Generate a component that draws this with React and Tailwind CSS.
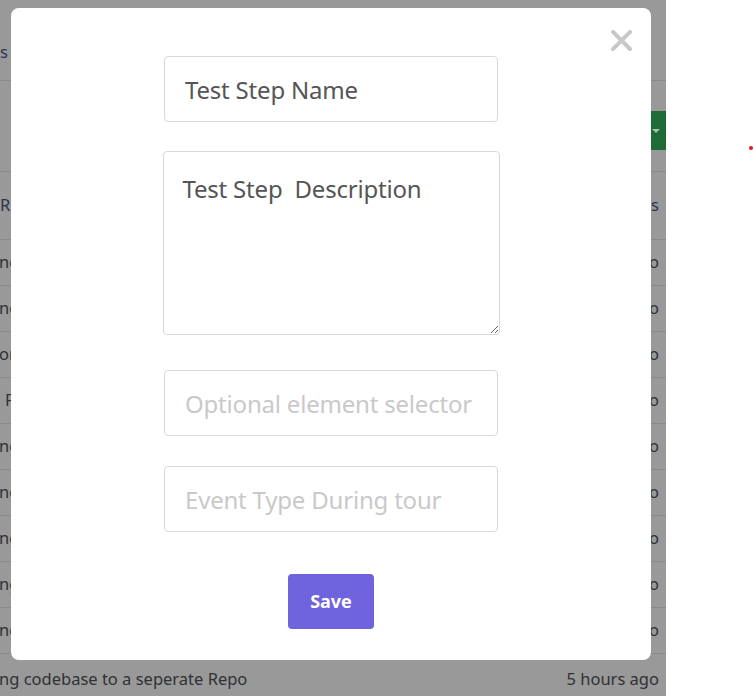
const rows = ["ng", "ng", "or", "F", "ng", "ng", "ng", "ng", "ng"];

const Row = ({ left, right }) => (
  <div className="flex h-[46px] items-center justify-between border-b border-[#8a8a8a] pr-[7px] text-[16.5px] text-[#2f3136]">
    <span className="-ml-[1px] whitespace-nowrap">{left}</span>
    <span className="whitespace-nowrap">{right}</span>
  </div>
);

const CloseIcon = () => (
  <svg width="21" height="21" viewBox="0 0 21 21" className="block">
    <path d="M2 2L19 19M19 2L2 19" stroke="#c8c8c8" strokeWidth="4" strokeLinecap="square" />
  </svg>
);

const App = () => (
  <div className="relative h-[696px] w-[754px] overflow-hidden bg-white font-['Noto_Sans',sans-serif]">
    {/* dimmed page behind the modal */}
    <div className="flex h-full w-[666px] flex-col bg-[#999999]">
      <div className="h-[81px] border-b border-[#8a8a8a] pt-[40px] text-[16.5px] leading-[24px] text-[#2a3550]">s</div>
      <div className="flex h-[91px] justify-end border-b border-[#8a8a8a]">
        <div className="mt-[30px] flex h-[39px] w-[15px] items-center bg-[#1e6b37] pl-[1px]">
          <span className="h-0 w-0 border-x-[4px] border-t-[4px] border-x-transparent border-t-[#a9c2b0]" />
        </div>
      </div>
      <div className="flex h-[68px] items-center justify-between border-b border-[#8a8a8a] pr-[7px] text-[16.5px] text-[#2a3550]">
        <span>R</span>
        <span>s</span>
      </div>
      {rows.map((r, i) => (
        <Row key={i} left={r === "F" ? <span className="pl-[6px]">F</span> : r} right="ago" />
      ))}
      <div className="flex flex-1 items-center justify-between pr-[7px] pt-[9px] text-[16.5px] text-[#2f3136]">
        <span className="-ml-[1px] whitespace-nowrap">ng codebase to a seperate Repo</span>
        <span className="whitespace-nowrap">5 hours ago</span>
      </div>
    </div>

    <span className="absolute left-[749px] top-[146px] h-[4px] w-[4px] rounded-full bg-[#e21b1b]" />

    {/* modal */}
    <div className="absolute left-[11px] top-[8px] flex h-[652px] w-[640px] flex-col items-center rounded-[8px] bg-white pt-[48px] tracking-[-0.2px]">
      <button className="absolute right-[19px] top-[22px]">
        <CloseIcon />
      </button>
      <input
        readOnly
        value="Test Step Name"
        className="h-[66px] w-[334px] rounded-[4px] border border-[#d9d9d9] px-[20px] text-[24px] text-[#555555] outline-none"
      />
      <textarea
        readOnly
        value="Test Step  Description"
        className="mt-[29px] h-[184px] w-[337px] rounded-[4px] border border-[#d9d9d9] px-[19px] pt-[19px] text-[24px] leading-[36px] text-[#555555] outline-none"
      />
      <input
        placeholder="Optional element selector"
        className="mt-[35px] h-[66px] w-[334px] rounded-[4px] border border-[#d9d9d9] px-[20px] text-[24px] text-[#555555] outline-none placeholder:text-[#c9c9c9]"
      />
      <input
        placeholder="Event Type During tour"
        className="mt-[30px] h-[66px] w-[334px] rounded-[4px] border border-[#d9d9d9] px-[20px] text-[24px] text-[#555555] outline-none placeholder:text-[#c9c9c9]"
      />
      <button className="mt-[42px] h-[55px] w-[86px] rounded-[4px] bg-[#7063de] text-[18px] font-bold tracking-normal text-white">
        Save
      </button>
    </div>
  </div>
);

export default App;
